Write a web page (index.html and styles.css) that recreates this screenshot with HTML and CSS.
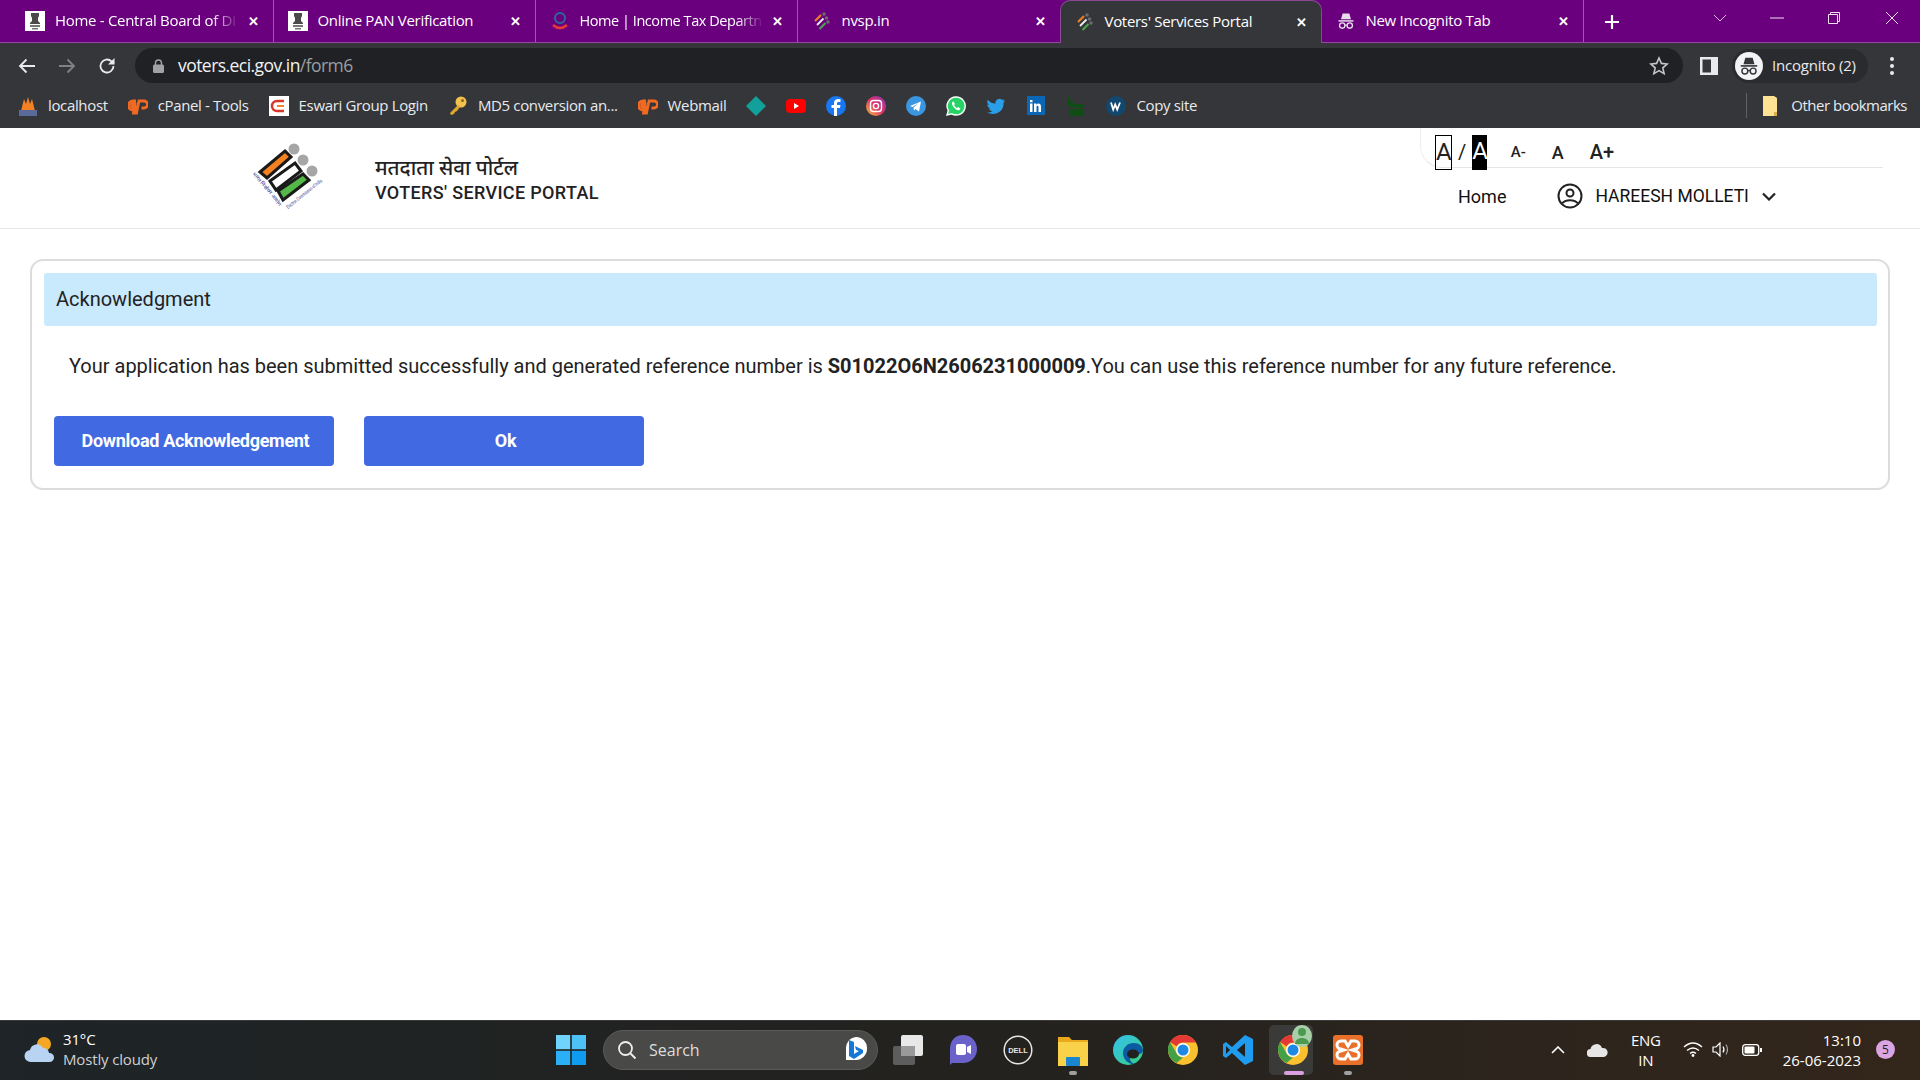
FILE: index.html
```html
<!DOCTYPE html>
<html lang="en">
<head>
  <meta charset="UTF-8">
  <title>Voters' Services Portal</title>
  <link rel="stylesheet" href="styles.css">
</head>
<body>
  <svg class="defs" width="0" height="0">
    <defs>
      <symbol id="emblem" viewBox="0 0 20 20">
        <rect width="20" height="20" fill="#fff"/>
        <path d="M6 2h8v3l-1 2v3l2 2v1H5v-1l2-2V7L6 5z" fill="#4a4a4a"/>
        <path d="M5 14h10v2H5zM7 17h6v1.500H7z" fill="#777"/>
      </symbol>
      <symbol id="eci" viewBox="0 0 20 20">
        <circle cx="12" cy="3" r="1.800" fill="#6b6b6b"/><circle cx="14.500" cy="7" r="1.800" fill="#6b6b6b"/><circle cx="16" cy="11" r="1.800" fill="#6b6b6b"/>
        <path d="M3 10l6-6" stroke="#e8802a" stroke-width="2.200"/>
        <path d="M5 14l6.500-6.500" stroke="#eee" stroke-width="1.800"/>
        <path d="M7.500 18l6-6" stroke="#4aa64e" stroke-width="2.200"/>
      </symbol>
      <symbol id="spy" viewBox="0 0 24 24">
        <path d="M8 3h8l2 7H6z" fill="currentColor"/>
        <path d="M3 11h18v1.800H3z" fill="currentColor"/>
        <circle cx="7.500" cy="17.500" r="3.200" fill="none" stroke="currentColor" stroke-width="1.600"/>
        <circle cx="16.500" cy="17.500" r="3.200" fill="none" stroke="currentColor" stroke-width="1.600"/>
        <path d="M10.500 17h3" stroke="currentColor" stroke-width="1.400"/>
      </symbol>
      <symbol id="cp" viewBox="0 0 20 20">
        <path d="M8 5H5a4 4 0 0 0 0 9h2l1-3H5a1 1 0 0 1 0-3h2l-1.500 9h3L11 5h5a3 3 0 0 1 0 7h-2.500" fill="none" stroke="#f26a21" stroke-width="2.800"/>
      </symbol>
      <symbol id="chrome" viewBox="0 0 30 30">
        <circle cx="15" cy="15" r="15" fill="#fbc02d"/>
        <path d="M15 0a15 15 0 0 1 13 7.500H15a7.500 7.500 0 0 0-6.500 3.800L2 7A15 15 0 0 1 15 0z" fill="#e53935"/>
        <path d="M2 7l6.500 11.300A7.500 7.500 0 0 0 15 22.500L8.500 28A15 15 0 0 1 2 7z" fill="#43a047"/>
        <circle cx="15" cy="15" r="7" fill="#fff"/><circle cx="15" cy="15" r="5.500" fill="#1e88e5"/>
      </symbol>
    </defs>
  </svg>

  <!-- Browser tabs -->
  <div class="tabstrip">
    <div class="tab first">
      <svg class="fav"><use href="#emblem"/></svg>
      <span class="tab-title fade">Home - Central Board of Di</span>
      <span class="tab-x">✕</span>
    </div>
    <div class="tab">
      <svg class="fav"><use href="#emblem"/></svg>
      <span class="tab-title">Online PAN Verification</span>
      <span class="tab-x">✕</span>
    </div>
    <div class="tab">
      <svg class="fav" viewBox="0 0 20 20"><path d="M3 14q7 6 14 0" fill="none" stroke="#e53935" stroke-width="2.500"/><circle cx="10" cy="7" r="5" fill="none" stroke="#2a6a9a" stroke-width="2"/></svg>
      <span class="tab-title fade tight">Home | Income Tax Departn</span>
      <span class="tab-x">✕</span>
    </div>
    <div class="tab no-sep">
      <svg class="fav"><use href="#eci"/></svg>
      <span class="tab-title">nvsp.in</span>
      <span class="tab-x">✕</span>
    </div>
    <div class="tab active">
      <svg class="fav"><use href="#eci"/></svg>
      <span class="tab-title">Voters' Services Portal</span>
      <span class="tab-x">✕</span>
    </div>
    <div class="tab">
      <svg class="fav spy-fav"><use href="#spy"/></svg>
      <span class="tab-title">New Incognito Tab</span>
      <span class="tab-x">✕</span>
    </div>
    <svg class="new-tab" width="16" height="16" viewBox="0 0 16 16"><path d="M8 1v14M1 8h14" stroke="#fff" stroke-width="2.200"/></svg>
    <div class="win-controls">
      <svg width="14" height="14" viewBox="0 0 14 14"><path d="M1 4l6 6 6-6" fill="none" stroke="#d9b8de" stroke-width="1"/></svg>
      <svg width="14" height="14" viewBox="0 0 14 14"><path d="M0 7h14" stroke="#f0e0f2" stroke-width="1"/></svg>
      <svg width="14" height="14" viewBox="0 0 14 14"><path d="M1.500 3.500h9v9h-9zM3.500 3.500v-2h9v9h-2" fill="none" stroke="#f0e0f2" stroke-width="1"/></svg>
      <svg class="win-close" width="14" height="14" viewBox="0 0 14 14"><path d="M1 1l12 12M13 1L1 13" stroke="#f0e0f2" stroke-width="1"/></svg>
    </div>
  </div>

  <!-- Address bar -->
  <div class="toolbar">
    <svg class="nav-icon" width="18" height="16" viewBox="0 0 18 16"><path d="M17 8H2M8.500 1.500L2 8l6.500 6.500" fill="none" stroke="#e8eaed" stroke-width="1.800"/></svg>
    <svg class="nav-icon" width="18" height="16" viewBox="0 0 18 16"><path d="M1 8h15M9.500 1.500L16 8l-6.500 6.500" fill="none" stroke="#7f8184" stroke-width="1.800"/></svg>
    <svg class="nav-icon" width="18" height="18" viewBox="0 0 18 18"><path d="M15.500 9a6.500 6.500 0 1 1-2-4.700L16 6.500" fill="none" stroke="#e8eaed" stroke-width="1.800"/><path d="M16.500 1v6.500H10z" fill="#e8eaed"/></svg>
    <div class="omnibox">
      <svg width="11" height="14" viewBox="0 0 11 14"><path d="M2.500 6V4a3 3 0 0 1 6 0v2" fill="none" stroke="#a0a2a5" stroke-width="1.400"/><rect y="5.500" width="11" height="8.500" rx="1.500" fill="#a0a2a5"/></svg>
      <span class="url">voters.eci.gov.in<span class="url-path">/form6</span></span>
      <svg class="star" width="20" height="20" viewBox="0 0 20 20"><path d="M10 2l2.400 5.400 5.800.6-4.400 3.900 1.300 5.700-5.100-3-5.100 3 1.300-5.700L1.800 8l5.800-.6z" fill="none" stroke="#c4c6c9" stroke-width="1.600"/></svg>
    </div>
    <svg class="panel-icon" width="18" height="18" viewBox="0 0 18 18"><rect width="18" height="18" fill="#e8eaed"/><rect x="2.500" y="2.500" width="8.500" height="13" fill="#35363a"/></svg>
    <div class="profile">
      <span class="avatar"><svg width="22" height="22"><use href="#spy"/></svg></span>
      <span class="profile-name">Incognito (2)</span>
    </div>
    <svg class="menu-dots" width="4" height="18" viewBox="0 0 4 18"><circle cx="2" cy="2" r="2" fill="#e8eaed"/><circle cx="2" cy="9" r="2" fill="#e8eaed"/><circle cx="2" cy="16" r="2" fill="#e8eaed"/></svg>
  </div>

  <!-- Bookmarks -->
  <div class="bookmarks">
    <div class="bm"><svg class="bm-icon" viewBox="0 0 20 20"><path d="M3 15L6 3l2 5 2-7 2 7 2-5 3 12z" fill="#f58220"/><rect x="1" y="14" width="18" height="6" fill="#5a6a9a"/></svg><span>localhost</span></div>
    <div class="bm"><svg class="bm-icon"><use href="#cp"/></svg><span>cPanel - Tools</span></div>
    <div class="bm"><svg class="bm-icon" viewBox="0 0 20 20"><rect width="20" height="20" fill="#fff"/><path d="M15 5H8a5 5 0 0 0 0 10h7" fill="none" stroke="#d9362b" stroke-width="2.500"/><path d="M8 10h7" stroke="#f58220" stroke-width="2"/></svg><span>Eswari Group Login</span></div>
    <div class="bm"><svg class="bm-icon" viewBox="0 0 20 20"><circle cx="13" cy="6" r="5.500" fill="#f2c14e"/><path d="M10 9l-8 8 1 2 3-1 1-2 2-1 3-4z" fill="#e0a82e"/><circle cx="14.500" cy="4.500" r="1.500" fill="#8a6a1a"/></svg><span>MD5 conversion an...</span></div>
    <div class="bm"><svg class="bm-icon"><use href="#cp"/></svg><span>Webmail</span></div>
    <div class="bm"><svg class="bm-icon" viewBox="0 0 20 20"><path d="M10 0l10 10-10 10L0 10z" fill="#12a19a"/></svg></div>
    <div class="bm"><svg class="bm-icon" viewBox="0 0 20 20"><rect y="3" width="20" height="14" rx="4" fill="#f00"/><path d="M8 7l5 3-5 3z" fill="#fff"/></svg></div>
    <div class="bm"><svg class="bm-icon" viewBox="0 0 20 20"><circle cx="10" cy="10" r="10" fill="#1877f2"/><path d="M11 20v-8h3l.5-3H11V7.500c0-1 .5-1.500 1.500-1.500h2V3.200C13.500 3 12.800 3 12 3 9.800 3 8 4.400 8 7v2H5.500v3H8v8z" fill="#fff"/></svg></div>
    <div class="bm"><svg class="bm-icon" viewBox="0 0 20 20"><defs><linearGradient id="ig" x1="0" y1="1" x2="1" y2="0"><stop offset="0" stop-color="#fdc830"/><stop offset=".5" stop-color="#e1306c"/><stop offset="1" stop-color="#833ab4"/></linearGradient></defs><circle cx="10" cy="10" r="10" fill="url(#ig)"/><rect x="4.500" y="4.500" width="11" height="11" rx="3" fill="none" stroke="#fff" stroke-width="1.400"/><circle cx="10" cy="10" r="2.600" fill="none" stroke="#fff" stroke-width="1.400"/></svg></div>
    <div class="bm"><svg class="bm-icon" viewBox="0 0 20 20"><circle cx="10" cy="10" r="10" fill="#3a96e0"/><path d="M4 10l11-4.500-2 10-3.500-2.500-1.500 1.500-.5-3 5-4.500-6 4z" fill="#fff"/></svg></div>
    <div class="bm"><svg class="bm-icon" viewBox="0 0 20 20"><path d="M10 1a9 9 0 0 0-7.700 13.500L1 19l4.700-1.200A9 9 0 1 0 10 1z" fill="#25d366" stroke="#fff" stroke-width="1.400"/><path d="M7 5.500c-1.500 1-1.500 3 .5 5.500s4.500 4 6 3l1-1.500-2.500-1.500-1 1c-1-.3-2.700-2-3-3l1-1L7.500 5.500z" fill="#fff"/></svg></div>
    <div class="bm"><svg class="bm-icon" viewBox="0 0 20 20"><path d="M19 4.500l-2 .6 1.500-2-2.200 1a4 4 0 0 0-6.800 3.600C6 7.500 3.500 6 1.800 3.800c-1 1.800-.5 4 1.200 5.200l-1.700-.4c0 1.900 1.300 3.400 3.200 3.900H2.800c.5 1.500 2 2.600 3.700 2.700A8 8 0 0 1 1 16.500C9 20.500 18 15.500 17.500 7z" fill="#2a9fe8"/></svg></div>
    <div class="bm"><svg class="bm-icon" viewBox="0 0 20 20"><rect x="1" width="18" height="19" fill="#0a66b7"/><path d="M4 7.500h2.500V16H4zM4 4h2.500v2.200H4zM8 7.500h2.400v1.200c1.400-2 4.600-1.600 4.600 1.800V16h-2.500v-5c0-1.800-2-1.800-2 0v5H8z" fill="#fff"/></svg></div>
    <div class="bm"><svg class="bm-icon" viewBox="0 0 20 20"><path d="M1 0h2v5h4v6H3v-1H1zM8 8h10v4H8zM4 13h14v7H4z" fill="#0f4d14"/></svg></div>
    <div class="bm"><svg class="bm-icon" viewBox="0 0 20 20"><circle cx="10" cy="10" r="10" fill="#13486e"/><path d="M5 6.500l2.200 7 2-5 2 5 2.800-7" fill="none" stroke="#fff" stroke-width="1.800"/></svg><span>Copy site</span></div>
    <div class="bm other">
      <svg class="bm-icon" viewBox="0 0 20 20"><path d="M2 0h11l3 2v18H2z" fill="#fde293"/><path d="M13 16h3v4h-3z" fill="#d9b24c"/></svg>
      <span>Other bookmarks</span>
    </div>
  </div>

  <!-- Portal page -->
  <div class="page">
    <header class="site-header">
      <div class="brand">
        <svg class="logo" width="72" height="70" viewBox="0 0 72 70">
          <circle cx="42" cy="6" r="5.500" fill="#a6a6a6"/>
          <circle cx="51" cy="17" r="5.500" fill="#a6a6a6"/>
          <circle cx="60" cy="28" r="5.500" fill="#a6a6a6"/>
          <g stroke="#1a1a1a" stroke-width="3" stroke-linejoin="miter">
            <path d="M8 29L33 8l6 6-24 21z" fill="#f58220"/>
            <path d="M18 38L43 20l6 8-25 19z" fill="#fff"/>
            <path d="M26 48L51 31l6 6-26 20z" fill="#53b848"/>
          </g>
          <defs>
            <path id="arcL" d="M0 31L28 64"/>
            <path id="arcR" d="M36 66L71 38"/>
          </defs>
          <text class="logo-small"><textPath href="#arcL" textLength="42" lengthAdjust="spacingAndGlyphs">भारत निर्वाचन आयोग</textPath></text>
          <text class="logo-small"><textPath href="#arcR" textLength="44" lengthAdjust="spacingAndGlyphs">Election Commission of India</textPath></text>
        </svg>
        <div class="brand-text">
          <div class="brand-hi">मतदाता सेवा पोर्टल</div>
          <div class="brand-en">VOTERS' SERVICE PORTAL</div>
        </div>
      </div>
      <div class="header-right">
        <div class="tools">
          <span class="contrast light">A</span>
          <span class="slash">/</span>
          <span class="contrast dark">A</span>
          <span class="size small">A-</span>
          <span class="size mid">A</span>
          <span class="size big">A+</span>
        </div>
        <nav class="site-nav">
          <span class="nav-home">Home</span>
          <svg class="user-icon" width="26" height="26" viewBox="0 0 26 26"><circle cx="13" cy="13" r="11.500" fill="none" stroke="#222" stroke-width="2"/><circle cx="13" cy="10" r="3.500" fill="none" stroke="#222" stroke-width="2"/><path d="M5 20.500c3-4.500 13-4.500 16 0" fill="none" stroke="#222" stroke-width="2"/></svg>
          <span class="user-name">HAREESH MOLLETI</span>
          <svg class="caret" width="14" height="9" viewBox="0 0 14 9"><path d="M1 1.500l6 6 6-6" fill="none" stroke="#222" stroke-width="2.200"/></svg>
        </nav>
      </div>
    </header>

    <main class="content">
      <section class="card">
        <div class="card-head">Acknowledgment</div>
        <p class="card-msg">Your application has been submitted successfully and generated reference number is <b>S01022O6N2606231000009</b>.You can use this reference number for any future reference.</p>
        <div class="actions">
          <button class="btn">Download Acknowledgement</button>
          <button class="btn">Ok</button>
        </div>
      </section>
    </main>
  </div>

  <!-- Windows taskbar -->
  <footer class="taskbar">
    <div class="weather">
      <svg width="32" height="28" viewBox="0 0 32 28"><circle cx="20" cy="8" r="7" fill="#f5a623"/><path d="M7 26a6 6 0 0 1-1-12 7 7 0 0 1 13-2 6 6 0 0 1 6 5 4.500 4.500 0 0 1 1 9z" fill="#b9d4f2"/></svg>
      <div class="weather-text">
        <div class="temp">31°C</div>
        <div class="sky">Mostly cloudy</div>
      </div>
    </div>
    <div class="task-center">
      <svg class="win-logo" width="30" height="30" viewBox="0 0 30 30"><rect width="14.200" height="14.200" fill="#6fd3fb"/><rect x="15.800" width="14.200" height="14.200" fill="#4cc2f7"/><rect y="15.800" width="14.200" height="14.200" fill="#2bb0f5"/><rect x="15.800" y="15.800" width="14.200" height="14.200" fill="#0f9bf0"/></svg>
      <div class="search">
        <svg width="20" height="20" viewBox="0 0 20 20"><circle cx="8.500" cy="8.500" r="6.500" fill="none" stroke="#eee" stroke-width="1.800"/><path d="M13.500 13.500l5 5" stroke="#eee" stroke-width="2"/></svg>
        <span>Search</span>
        <svg class="bing" width="24" height="28" viewBox="0 0 24 28"><path d="M12 1a11 11 0 0 1 11 12c0 6-5 11-11 11H2V13A11 11 0 0 1 12 1z" fill="#fff"/><path d="M5 4l5 2v12l5-3-3-1-1-4 8 4v3l-9 6-5-3z" fill="#1479d6"/></svg>
      </div>
      <div class="apps">
        <div class="app"><svg width="30" height="30" viewBox="0 0 30 30"><rect y="11" width="22" height="19" rx="2" fill="#5d5d5d"/><rect x="8" width="22" height="21" rx="2" fill="#e8e8e8"/><rect x="8" y="11" width="14" height="10" fill="#9a9a9a"/></svg></div>
        <div class="app"><svg width="30" height="30" viewBox="0 0 30 30"><path d="M15 0c8 0 14 6 14 14s-6 14-14 14H4l-2 2V14C2 6 7 0 15 0z" fill="#6a62c9"/><rect x="8" y="9" width="10" height="11" rx="2" fill="#fff"/><path d="M19 12l4-2v9l-4-2z" fill="#fff"/></svg></div>
        <div class="app"><svg width="30" height="30" viewBox="0 0 30 30"><circle cx="15" cy="15" r="13.800" fill="none" stroke="#e6e6e6" stroke-width="1.500"/><text class="dell" x="15" y="18" text-anchor="middle">DELL</text></svg></div>
        <div class="app has-dot"><svg width="30" height="32" viewBox="0 0 30 32"><path d="M0 2h11l3 3h16v6H0z" fill="#eaa91d"/><rect y="7" width="30" height="24" fill="#fad249"/><rect x="8" y="22" width="14" height="9" rx="1" fill="#1a86d0"/></svg></div>
        <div class="app"><svg width="30" height="30" viewBox="0 0 30 30"><defs><linearGradient id="edge" x1="0" y1="0" x2="1" y2="1"><stop offset="0" stop-color="#35c1f1"/><stop offset="1" stop-color="#35d07f"/></linearGradient></defs><circle cx="15" cy="15" r="15" fill="url(#edge)"/><path d="M30 16c0-5-4-8-9-8-7 0-11 5-11 10 0 7 6 12 13 11-7 0-8-9-3-10 3-1 8 2 10-3z" fill="#0c59a4"/><ellipse cx="20" cy="19" rx="6" ry="4.500" fill="#232120"/></svg></div>
        <div class="app"><svg width="30" height="30"><use href="#chrome"/></svg></div>
        <div class="app"><svg width="30" height="30" viewBox="0 0 30 30"><path d="M22 0l8 4v22l-8 4L9 18l-6 5-3-2v-12l3-2 6 5z" fill="#1f9cf0"/><path d="M22 8l-8 7 8 7z" fill="#232120"/><path d="M3 11v8l4-4z" fill="#232120"/></svg></div>
        <div class="app active-app"><svg width="30" height="30"><use href="#chrome"/></svg><span class="app-badge"><svg width="18" height="20" viewBox="0 0 18 20"><circle cx="9" cy="6" r="4" fill="#4c9a50"/><path d="M2 18c0-8 14-8 14 0z" fill="#4c9a50"/></svg></span></div>
        <div class="app has-dot"><svg width="30" height="30" viewBox="0 0 30 30"><rect width="30" height="30" rx="3" fill="#e8702a"/><path d="M8 6h4l3 5 3-5h4a3 3 0 0 1 0 8l-3 1 3 1a3 3 0 0 1 0 8h-4l-3-5-3 5H8a3 3 0 0 1 0-8l3-1-3-1a3 3 0 0 1 0-8z" fill="none" stroke="#fff" stroke-width="3"/></svg></div>
      </div>
    </div>
    <div class="tray">
      <svg width="14" height="8" viewBox="0 0 14 8"><path d="M1 7l6-6 6 6" fill="none" stroke="#fff" stroke-width="1.600"/></svg>
      <svg class="tray-cloud" width="21" height="14" viewBox="0 0 21 14"><path d="M4 14a4 4 0 0 1-.5-8A6 6 0 0 1 15 5a4.500 4.500 0 0 1 2 9z" fill="#e6e6e6"/></svg>
      <div class="lang">ENG<br>IN</div>
      <svg class="wifi" width="20" height="15" viewBox="0 0 20 15"><path d="M1 5q9-8 18 0M4 8.500q6-5 12 0M7 11.500q3-2.500 6 0" fill="none" stroke="#fff" stroke-width="1.300"/><circle cx="10" cy="13.500" r="1.400" fill="#fff"/></svg>
      <svg class="vol" width="20" height="15" viewBox="0 0 20 15"><path d="M1 5h3l4-4v13l-4-4H1z" fill="none" stroke="#fff" stroke-width="1.200"/><path d="M11 4.500q2 3 0 6" fill="none" stroke="#fff" stroke-width="1.200"/><path d="M14 2.500q3 5 0 10" fill="none" stroke="#aaa" stroke-width="1.100"/></svg>
      <svg class="batt" width="20" height="12" viewBox="0 0 20 12"><rect x=".7" y=".7" width="16" height="10.600" rx="2.500" fill="none" stroke="#fff" stroke-width="1.300"/><rect x="2.500" y="2.500" width="10" height="7" rx="1" fill="#fff"/><rect x="18" y="4" width="2" height="4" fill="#fff"/></svg>
      <div class="clock"><div>13:10</div><div>26-06-2023</div></div>
      <span class="notif">5</span>
    </div>
  </footer>
</body>
</html>
```

FILE: styles.css
```css
* { box-sizing: border-box; }
html, body { margin: 0; padding: 0; }
body { width: 1920px; height: 1080px; overflow: hidden; display: flex; flex-direction: column; font-family: Roboto, sans-serif; background: #fff; }
.defs { position: absolute; }
svg { display: block; flex: none; }

/* Chrome tabs */
.tabstrip { display: flex; height: 43px; flex: none; padding-left: 11px; background: #6a007e; border-bottom: 1px solid #94489f; color: #fff; font-family: "Open Sans", sans-serif; font-size: 15px; letter-spacing: -0.3px; }
.tab { width: 262px; height: 42px; display: flex; align-items: center; padding: 0 12px 0 14px; border-right: 1px solid #9a5aa6; background-clip: padding-box; flex: none; position: relative; }
.tab.no-sep { border-right: none; }
.tab.active { background: #35363a; height: 43px; margin-bottom: -1px; border: 1px solid #8a4a96; border-bottom: none; border-radius: 10px 10px 0 0; padding: 0 12px 0 14px; z-index: 1; }
.tab .fav { width: 20px; height: 20px; margin-right: 10px; }
.tab.first { width: 262.500px; }
.spy-fav { color: #e6dcea; }
.tab-title { flex: 1; padding-bottom: 2px; white-space: nowrap; }
.tab-title.fade { -webkit-mask-image: linear-gradient(to right, #000 85%, transparent 100%); mask-image: linear-gradient(to right, #000 85%, transparent 100%); margin-right: 6px; flex: none; width: 184px; }
.tab-title.tight { font-size: 14.500px; letter-spacing: -0.45px; }
.tab-x { margin-left: auto; font-size: 13px; font-weight: 700; width: 14px; text-align: center; letter-spacing: 0; }
.new-tab { margin: 14px 0 0 20px; }
.win-controls { margin-left: 93px; display: flex; gap: 43px; padding-top: 11px; }
.win-close { margin-left: 1px; }

/* Address bar */
.toolbar { height: 40px; flex: none; background: #35363a; display: flex; align-items: center; padding: 5px 0 0 18px; color: #e8eaed; font-family: "Open Sans", sans-serif; }
.nav-icon { margin-right: 22px; }
.omnibox { width: 1548px; height: 35px; margin-left: -3px; background: #202124; border-radius: 18px; display: flex; align-items: center; padding: 0 14px 0 18px; }
.url { margin-left: 14px; padding-bottom: 2px; font-size: 17.500px; letter-spacing: -0.55px; color: #f1f3f4; }
.url-path { color: #9a9da1; }
.star { margin-left: auto; }
.panel-icon { margin-left: 17px; }
.profile { margin-left: 14px; width: 136px; height: 34px; background: #2a2b2e; border-radius: 17px; display: flex; align-items: center; gap: 9px; padding-left: 3px; font-size: 15px; letter-spacing: -0.2px; white-space: nowrap; }
.profile-name { padding-bottom: 2px; }
.avatar { width: 28px; height: 28px; border-radius: 50%; background: #f1f3f4; color: #35363a; display: flex; align-items: center; justify-content: center; }
.menu-dots { margin-left: 22px; }

/* Bookmarks bar */
.bookmarks { height: 45px; flex: none; background: #35363a; display: flex; align-items: center; gap: 20px; padding-left: 18px; color: #e8eaed; font-family: "Open Sans", sans-serif; font-size: 15px; letter-spacing: -0.35px; white-space: nowrap; }
.bm { display: flex; align-items: center; gap: 10px; }
.bm span { padding-bottom: 2px; }
.bm-icon { width: 20px; height: 20px; }
.bm.other { margin-left: auto; padding-left: 14px; padding-right: 13px; border-left: 1px solid #5f6165; height: 25px; letter-spacing: -0.5px; }

/* Portal header */
.page { flex: 1; display: flex; flex-direction: column; background: #fff; }
.site-header { height: 101px; flex: none; display: flex; justify-content: space-between; border-bottom: 1px solid #e6e6e6; padding: 0 37px 0 252px; color: #222; }
.brand { display: flex; align-items: center; gap: 51px; }
.brand-text { margin-top: 4px; }
.brand-hi { font-family: "Noto Sans", "Noto Sans CJK SC", Roboto, sans-serif; font-size: 20.500px; font-weight: 500; line-height: 24px; }
.brand-en { margin-top: 2px; font-size: 18px; font-weight: 500; line-height: 24px; letter-spacing: 0.35px; }
.logo-small { font-family: Roboto, sans-serif; font-size: 5px; fill: #2a2f8a; }

.header-right { width: 463px; }
.tools { height: 40px; display: flex; align-items: center; padding: 9px 0 0 14px; border-left: 1px solid #eee; border-bottom: 1px solid #e5e5e5; border-bottom-left-radius: 22px; color: #222; }
.contrast { height: 35px; font-size: 24px; line-height: 33px; text-align: center; flex: none; }
.contrast.light { width: 17px; border: 1px solid #000; }
.contrast.dark { width: 15px; background: #000; color: #fff; }
.slash { font-size: 20px; margin: 0 6px 0 6px; }
.size { font-weight: 500; }
.size.small { font-size: 15px; margin-left: 23.500px; }
.size.mid { font-size: 18px; margin-left: 26px; }
.size.big { font-size: 20px; margin-left: 26px; }
.site-nav { height: 56px; display: flex; align-items: center; padding-left: 38px; font-size: 17.500px; color: #111; }
.nav-home { font-size: 18px; }
.user-icon { margin-left: 51px; }
.user-name { margin-left: 12px; }
.caret { margin-left: 13px; }

/* Acknowledgement card */
.content { padding: 30px 30px 0; }
.card { height: 231px; border: 2px solid #dcdcdc; border-radius: 13px; padding: 12px 11px 0 12px; }
.card-head { height: 53px; background: #c9e9fd; border-radius: 3px; padding-left: 12px; font-size: 20px; line-height: 52px; color: #222; }
.card-msg { margin: 26px 0 0 25px; font-size: 20px; letter-spacing: -0.008px; line-height: 28px; color: #222; white-space: nowrap; }
.card-msg b { font-weight: 700; }
.actions { margin: 36px 0 0 10px; display: flex; gap: 30px; }
.btn { width: 280px; height: 50px; padding: 0 0 2px 3px; border: none; border-radius: 4px; background: #4169e1; color: #fff; font-family: Roboto, sans-serif; font-size: 18px; font-weight: 700; letter-spacing: -0.3px; }

/* Taskbar */
.taskbar { height: 60px; flex: none; position: relative; display: flex; align-items: center; padding-bottom: 2px; background: linear-gradient(to right, #1e2427 0%, #23221f 50%, #33261b 100%); border-top: 1px solid #3a3a3a; color: #fff; font-family: "Open Sans", sans-serif; }
.weather { display: flex; align-items: center; gap: 7px; padding-left: 24px; width: 556px; flex: none; font-size: 15px; letter-spacing: -0.15px; }
.weather-text { line-height: 20px; padding-bottom: 2px; }
.sky { color: #d0d0d0; }
.task-center { display: flex; align-items: center; }
.search { margin-left: 17px; width: 275px; height: 40px; border-radius: 20px; background: #494a47; border: 1px solid #5a5a57; display: flex; align-items: center; padding: 0 9px 0 13px; gap: 12px; font-size: 16px; color: #ddd; }
.bing { margin-left: auto; }
.apps { display: flex; margin-left: 15px; gap: 25px; }
.app { position: relative; width: 30px; height: 30px; }
.has-dot::after { content: ""; position: absolute; left: 11px; top: 36px; width: 8px; height: 4px; border-radius: 2px; background: #a0a0a0; }
.active-app::before { content: ""; position: absolute; left: -9px; top: -10px; width: 44px; height: 50px; background: #3a3a38; border-radius: 5px; }
.active-app::after { content: ""; position: absolute; left: 6px; top: 36px; width: 20px; height: 4px; border-radius: 2px; background: #d9a0e0; }
.active-app > svg { position: relative; }
.app-badge { position: absolute; left: 14px; top: -10px; width: 20px; height: 22px; border-radius: 50%; background: #a8cfa8; display: flex; align-items: center; justify-content: center; }
.dell { font-family: "Liberation Sans", sans-serif; font-size: 7.500px; font-weight: 700; fill: #e6e6e6; }
.tray { margin-left: auto; display: flex; align-items: center; padding-right: 25px; }
.tray-cloud { margin-left: 22px; }
.lang { margin-left: 21px; width: 34px; text-align: center; font-size: 15px; line-height: 20px; letter-spacing: -0.3px; }
.wifi { margin-left: 20px; }
.vol { margin-left: 9px; }
.batt { margin-left: 10px; }
.clock { margin-left: 21px; text-align: right; font-size: 15px; line-height: 20px; }
.notif { margin-left: 15px; width: 19px; height: 19px; border-radius: 50%; background: #dba4e2; color: #222; font-size: 12px; line-height: 19px; text-align: center; }
```
